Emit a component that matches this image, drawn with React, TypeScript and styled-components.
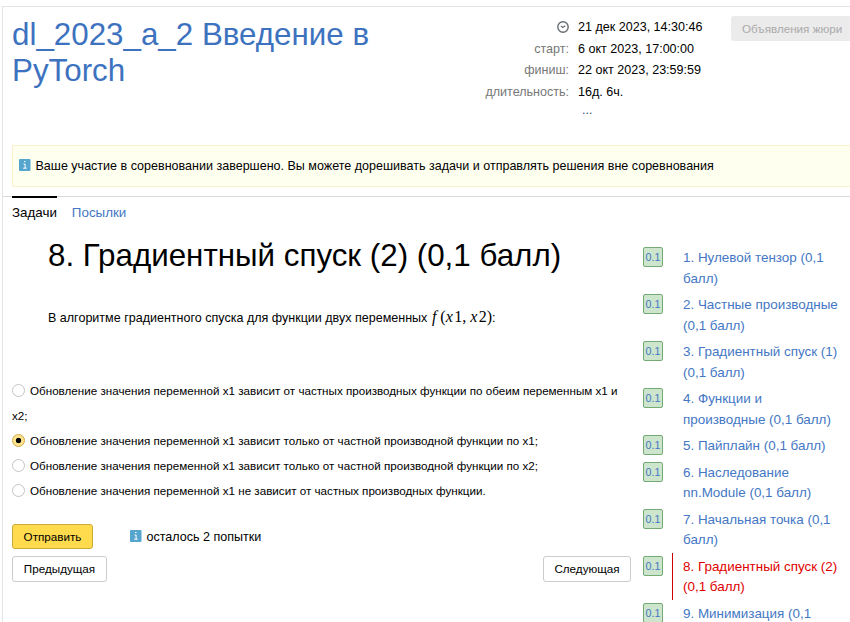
import React from 'react';
import styled, { createGlobalStyle, css } from 'styled-components';

const GlobalStyle = createGlobalStyle`
  *, *::before, *::after { box-sizing: border-box; }
  html, body { margin: 0; background: #fff; overflow: hidden; }
  body { font-family: "Liberation Sans", Arial, sans-serif; font-size: 13px; color: #000; }
  h1, h2, p, ol, dl, dd { margin: 0; padding: 0; font-weight: normal; }
`;

const Page = styled.div`
  width: 850px;
  height: 622px;
  padding: 6px 0 0 2px;
  overflow: hidden;
`;

const Sheet = styled.div`
  height: 616px;
  border-top: 1px solid #e4e4e4;
  border-left: 1px solid #e4e4e4;
  display: flex;
  flex-direction: column;
`;

const Header = styled.header`
  display: flex;
  height: 138px;
  flex: none;
  padding-left: 9px;
`;

const Title = styled.h1`
  flex: none;
  width: 462px;
  padding-top: 10px;
  font-size: 31.33px;
  line-height: 36px;
  color: #3d72bf;
`;

const Schedule = styled.dl`
  display: grid;
  flex: none;
  grid-template-columns: 95px 1fr;
  grid-template-rows: 22px 21px 22px 21px 16px;
  column-gap: 9px;
  width: 257px;
  padding-top: 9px;
  font-size: 12.56px;
  line-height: 22px;
`;

const Term = styled.dt`
  color: #777;
  text-align: right;
  white-space: nowrap;
`;

const Clock = styled.svg`
  display: block;
  width: 12px;
  height: 12px;
  margin: 5px 0 0 auto;
`;

const More = styled.dd`
  grid-column: 2;
  padding-left: 4px;
  line-height: 17px;
  color: #3c4f73;
`;

const JuryButton = styled.button`
  flex: 1;
  height: 25px;
  margin-top: 9px;
  padding: 0 0 0 11px;
  border: 0;
  border-radius: 3px 0 0 3px;
  background: #ebebeb;
  color: #aaa;
  text-align: left;
  font: 11.66px "Liberation Sans", Arial, sans-serif;
  white-space: nowrap;
`;

const Notice = styled.div`
  display: flex;
  align-items: center;
  flex: none;
  height: 42px;
  margin-left: 9px;
  padding: 0 0 1px 6px;
  border: 1px solid #faf3cd;
  border-right: 0;
  background: #fffff0;
  font-size: 12.54px;
  gap: 4.5px;
`;

const InfoSvg = styled.svg`
  display: block;
  flex: none;
  width: 12px;
  height: 12px;
  margin-bottom: 2px;
`;

const Tabs = styled.nav`
  display: flex;
  flex: none;
  gap: 15px;
  height: 38px;
  margin-top: 9px;
  padding-left: 9px;
  border-top: 1px solid #d9d9d9;
`;

const Tab = styled.a<{ $active?: boolean }>`
  height: 30px;
  margin-top: -1px;
  padding-top: 6px;
  line-height: 17px;
  font-size: 13.37px;
  border-top: 2px solid ${p => (p.$active ? '#000' : 'transparent')};
  color: ${p => (p.$active ? '#000' : '#4477c4')};
`;

const Body = styled.div`
  display: flex;
  flex: 1;
  min-height: 0;
`;

const Main = styled.main`
  width: 628px;
  flex: none;
  padding-left: 9px;
`;

const Statement = styled.section`
  height: 144px;
  padding: 2px 0 0 36px;
`;

const Heading = styled.h2`
  font-size: 31.33px;
  line-height: 40px;
  white-space: nowrap;
`;

const Task = styled.p`
  margin-top: 32px;
  font-size: 12.54px;
  line-height: 20px;
  white-space: nowrap;
`;

const Formula = styled.span`
  margin-left: 1px;
  font-family: "Liberation Serif", "Times New Roman", serif;
  font-size: 16px;
  line-height: 16px;
`;

const Variable = styled.i<{ $gap: number }>`
  margin-right: ${p => p.$gap}px;
`;

const Option = styled.label`
  display: block;
  font-size: 11.65px;
  line-height: 25px;
`;

const Radio = styled.span<{ $checked?: boolean }>`
  display: inline-block;
  width: 13px;
  height: 13px;
  margin-right: 5px;
  border: 1px solid #c4c4c4;
  border-radius: 50%;
  vertical-align: -2px;
  background: #fff;
  ${p => p.$checked && css`
    border-color: #c9aa45;
    background: radial-gradient(circle at center, #000 2.3px, #ffe38e 3.1px);
  `}
`;

const Row = styled.div`
  display: flex;
  align-items: center;
`;

const SubmitRow = styled(Row)`
  margin-top: 21px;
  gap: 36.5px;
`;

const PagerRow = styled(Row)`
  margin-top: 7px;
  justify-content: space-between;
`;

const Button = styled.button<{ $primary?: boolean; $width: number }>`
  width: ${p => p.$width}px;
  height: ${p => (p.$primary ? 25 : 26)}px;
  padding: 0 0 ${p => (p.$primary ? 0 : 2)}px;
  border: 1px solid ${p => (p.$primary ? '#cdac35' : '#ccc')};
  border-radius: 3px;
  background: ${p => (p.$primary ? '#ffdb4d' : '#fff')};
  color: #000;
  font: 11.66px "Liberation Sans", Arial, sans-serif;
  white-space: nowrap;
`;

const Attempts = styled.div`
  display: flex;
  align-items: center;
  gap: 5px;
  font-size: 12.54px;
`;

const Problems = styled.ol`
  flex: 1;
  padding: 10px 0 0 12px;
  list-style: none;
`;

const Problem = styled.li<{ $short?: boolean }>`
  display: flex;
  height: ${p => (p.$short ? 27 : 47)}px;
`;

const Score = styled.span`
  width: 20px;
  height: 20px;
  margin-top: 3px;
  border: 1px solid #74ab74;
  border-radius: 2px;
  background: #cce5cc;
  color: #4477c4;
  font-size: 10.7px;
  line-height: 18px;
  text-align: center;
`;

const ProblemLink = styled.a<{ $current?: boolean; $tight?: boolean }>`
  margin-left: 9px;
  padding: 4px 0 0 10px;
  border-left: 1px solid ${p => (p.$current ? '#d00000' : 'transparent')};
  color: ${p => (p.$current ? '#e00000' : '#4477c4')};
  font-size: 13.43px;
  line-height: ${p => (p.$tight ? 20 : 20.6)}px;
  white-space: nowrap;
`;

const Info = () => (
  <InfoSvg viewBox="0 0 12 12">
    <rect x="0" y="0" width="11.5" height="12" rx="1" fill="#55a5cf" />
    <path d="M5 2.5h1.5M4.5 5h1.6v4M4.2 9.2h3.4" fill="none" stroke="#fff" strokeWidth="1" />
  </InfoSvg>
);

const options = [
  { text: 'Обновление значения переменной x1 зависит от частных производных функции по обеим переменным x1 и x2;' },
  { text: 'Обновление значения переменной x1 зависит только от частной производной функции по x1;', checked: true },
  { text: 'Обновление значения переменной x1 зависит только от частной производной функции по x2;' },
  { text: 'Обновление значения переменной x1 не зависит от частных производных функции.' },
];

const problems = [
  ['1. Нулевой тензор (0,1', 'балл)'],
  ['2. Частные производные', '(0,1 балл)'],
  ['3. Градиентный спуск (1)', '(0,1 балл)'],
  ['4. Функции и', 'производные (0,1 балл)'],
  ['5. Пайплайн (0,1 балл)'],
  ['6. Наследование', 'nn.Module (0,1 балл)'],
  ['7. Начальная точка (0,1', 'балл)'],
  ['8. Градиентный спуск (2)', '(0,1 балл)'],
  ['9. Минимизация (0,1'],
];

export default function App() {
  return (
    <Page>
      <GlobalStyle />
      <Sheet>
        <Header>
          <Title>dl_2023_a_2 Введение в<br />PyTorch</Title>
          <Schedule>
            <Term>
              <Clock viewBox="0 0 12 12" fill="none" stroke="#666b70">
                <circle cx="6" cy="6" r="5.2" strokeWidth="1.4" />
                <path d="M3.8 4.8L5.8 6.5L8.3 4.7" strokeWidth="1.1" />
              </Clock>
            </Term>
            <dd>21 дек 2023, 14:30:46</dd>
            <Term>старт:</Term><dd>6 окт 2023, 17:00:00</dd>
            <Term>финиш:</Term><dd>22 окт 2023, 23:59:59</dd>
            <Term>длительность:</Term><dd>16д. 6ч.</dd>
            <More>...</More>
          </Schedule>
          <JuryButton>Объявления жюри</JuryButton>
        </Header>
        <Notice>
          <Info />
          <span>Ваше участие в соревновании завершено. Вы можете дорешивать задачи и отправлять решения вне соревнования</span>
        </Notice>
        <Tabs>
          <Tab $active>Задачи</Tab>
          <Tab>Посылки</Tab>
        </Tabs>
        <Body>
          <Main>
            <Statement>
              <Heading>8. Градиентный спуск (2) (0,1 балл)</Heading>
              <Task>
                В алгоритме градиентного спуска для функции двух переменных{' '}
                <Formula><Variable $gap={4}>f</Variable>(<Variable $gap={1.4}>x</Variable>1, <Variable $gap={1.4}>x</Variable>2)</Formula>:
              </Task>
            </Statement>
            {options.map(o => (
              <Option key={o.text}><Radio $checked={o.checked} />{o.text}</Option>
            ))}
            <SubmitRow>
              <Button $primary $width={81}>Отправить</Button>
              <Attempts><Info />осталось 2 попытки</Attempts>
            </SubmitRow>
            <PagerRow>
              <Button $width={95}>Предыдущая</Button>
              <Button $width={88}>Следующая</Button>
            </PagerRow>
          </Main>
          <Problems>
            {problems.map((lines, i) => (
              <Problem key={lines[0]} $short={lines.length === 1}>
                <Score>0.1</Score>
                <ProblemLink $current={i === 7} $tight={i > 4}>
                  {lines[0]}{lines[1] && <><br />{lines[1]}</>}
                </ProblemLink>
              </Problem>
            ))}
          </Problems>
        </Body>
      </Sheet>
    </Page>
  );
}
